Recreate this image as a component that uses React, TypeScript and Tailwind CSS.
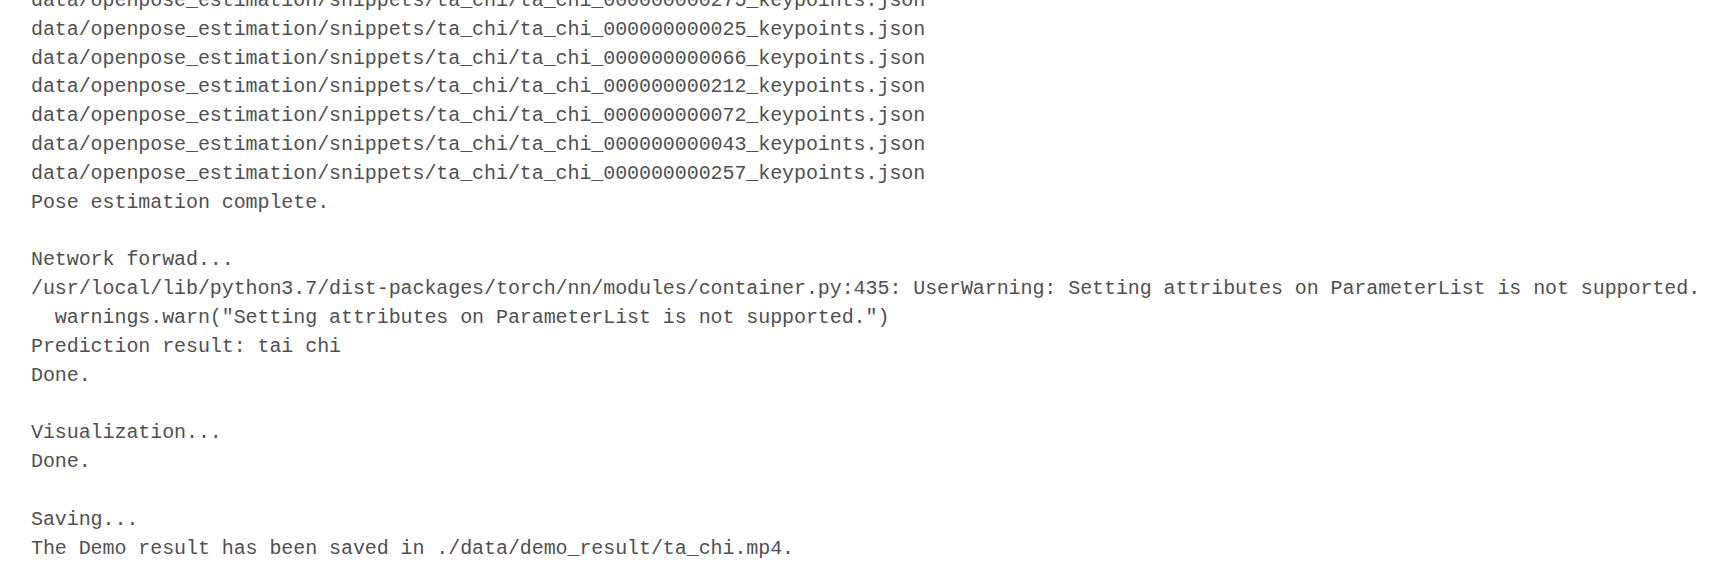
const lines = [
  "data/openpose_estimation/snippets/ta_chi/ta_chi_000000000275_keypoints.json",
  "data/openpose_estimation/snippets/ta_chi/ta_chi_000000000025_keypoints.json",
  "data/openpose_estimation/snippets/ta_chi/ta_chi_000000000066_keypoints.json",
  "data/openpose_estimation/snippets/ta_chi/ta_chi_000000000212_keypoints.json",
  "data/openpose_estimation/snippets/ta_chi/ta_chi_000000000072_keypoints.json",
  "data/openpose_estimation/snippets/ta_chi/ta_chi_000000000043_keypoints.json",
  "data/openpose_estimation/snippets/ta_chi/ta_chi_000000000257_keypoints.json",
  "Pose estimation complete.",
  "",
  "Network forwad...",
  "/usr/local/lib/python3.7/dist-packages/torch/nn/modules/container.py:435: UserWarning: Setting attributes on ParameterList is not supported.",
  "  warnings.warn(\"Setting attributes on ParameterList is not supported.\")",
  "Prediction result: tai chi",
  "Done.",
  "",
  "Visualization...",
  "Done.",
  "",
  "Saving...",
  "The Demo result has been saved in ./data/demo_result/ta_chi.mp4.",
];

export default function App() {
  return (
    <div className="h-[573px] w-[1714px] overflow-hidden bg-white">
      <pre className="mt-[-13px] pl-[31px] font-['Liberation_Mono',monospace] text-[20px] tracking-[-0.08px] leading-[28.84px] text-[#505050] whitespace-pre">
        {lines.map((line, i) => (
          <div key={i} className="h-[28.84px]">
            {line}
          </div>
        ))}
      </pre>
    </div>
  );
}
